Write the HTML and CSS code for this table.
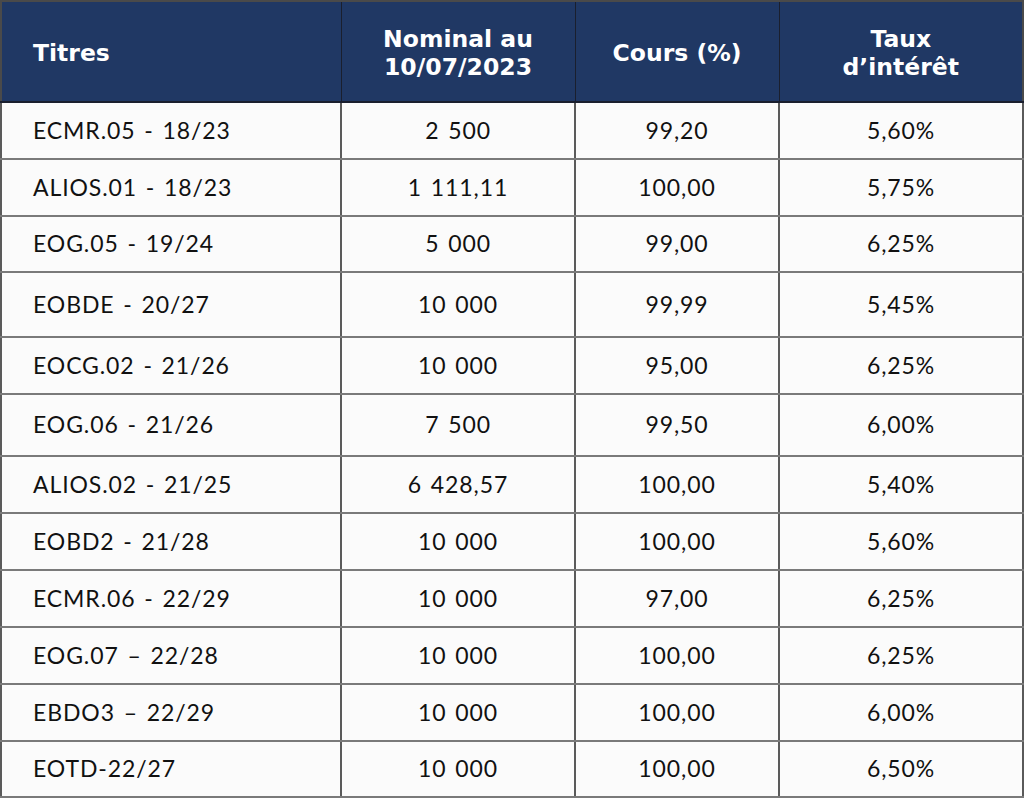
FILE: index.html
```html
<!DOCTYPE html>
<html lang="fr">
<head>
<meta charset="utf-8">
<title>Titres</title>
<link rel="stylesheet" href="styles.css">
</head>
<body>
<table class="grid">
  <colgroup>
    <col class="c1"><col class="c2"><col class="c3"><col class="c4">
  </colgroup>
  <thead>
    <tr class="head">
      <th class="left">Titres</th>
      <th>Nominal au<br>10/07/2023</th>
      <th>Cours (%)</th>
      <th>Taux<br>d’intérêt</th>
    </tr>
  </thead>
  <tbody>
    <tr class="h57"><td class="left">ECMR.05 - 18/23</td><td>2 500</td><td>99,20</td><td>5,60%</td></tr>
    <tr class="h57"><td class="left">ALIOS.01 - 18/23</td><td>1 111,11</td><td>100,00</td><td>5,75%</td></tr>
    <tr class="h56"><td class="left">EOG.05 - 19/24</td><td>5 000</td><td>99,00</td><td>6,25%</td></tr>
    <tr class="h65"><td class="left">EOBDE - 20/27</td><td>10 000</td><td>99,99</td><td>5,45%</td></tr>
    <tr class="h57"><td class="left">EOCG.02 - 21/26</td><td>10 000</td><td>95,00</td><td>6,25%</td></tr>
    <tr class="h62"><td class="left">EOG.06 - 21/26</td><td>7 500</td><td>99,50</td><td>6,00%</td></tr>
    <tr class="h57"><td class="left">ALIOS.02 - 21/25</td><td>6 428,57</td><td>100,00</td><td>5,40%</td></tr>
    <tr class="h57"><td class="left">EOBD2 - 21/28</td><td>10 000</td><td>100,00</td><td>5,60%</td></tr>
    <tr class="h57"><td class="left">ECMR.06 - 22/29</td><td>10 000</td><td>97,00</td><td>6,25%</td></tr>
    <tr class="h57"><td class="left">EOG.07 – 22/28</td><td>10 000</td><td>100,00</td><td>6,25%</td></tr>
    <tr class="h57"><td class="left">EBDO3 – 22/29</td><td>10 000</td><td>100,00</td><td>6,00%</td></tr>
    <tr class="h56"><td class="left">EOTD-22/27</td><td>10 000</td><td>100,00</td><td>6,50%</td></tr>
  </tbody>
</table>
</body>
</html>
```

FILE: styles.css
```css
html, body {
  margin: 0;
  padding: 0;
  background: #ffffff;
}

.grid {
  border-collapse: collapse;
  table-layout: fixed;
  width: 1022px;
  margin: 0;
  font-family: "Lato", "Open Sans", sans-serif;
  color: #111111;
  border: 2px solid #4a4a4a;
}

.c1 { width: 340px; }
.c2 { width: 234px; }
.c3 { width: 204px; }
.c4 { width: 244px; }

.head {
  height: 101px;
  background: #203864;
}

.head th {
  color: #ffffff;
  font-family: "DejaVu Sans", "Lato", sans-serif;
  font-weight: 700;
  font-size: 23.5px;
  line-height: 28px;
  text-align: center;
  vertical-align: middle;
  padding: 2px 0 0 0;
  border-left: 1px solid #1a1f2e;
  border-right: 1px solid #1a1f2e;
  border-bottom: 2px solid #1a1f2e;
}

td {
  font-size: 23px;
  letter-spacing: 0.9px;
  word-spacing: 2px;
  text-align: center;
  vertical-align: middle;
  background: #fbfbfb;
  padding: 0 0 2px 0;
  border: 2px solid #5a5a5a;
  border-top-color: #7a7a7a;
  border-bottom-color: #7a7a7a;
}

.grid .left {
  text-align: left;
  padding-left: 31px;
}

.h56 { height: 56px; }
.h57 { height: 57px; }
.h62 { height: 62px; }
.h65 { height: 65px; }
```
